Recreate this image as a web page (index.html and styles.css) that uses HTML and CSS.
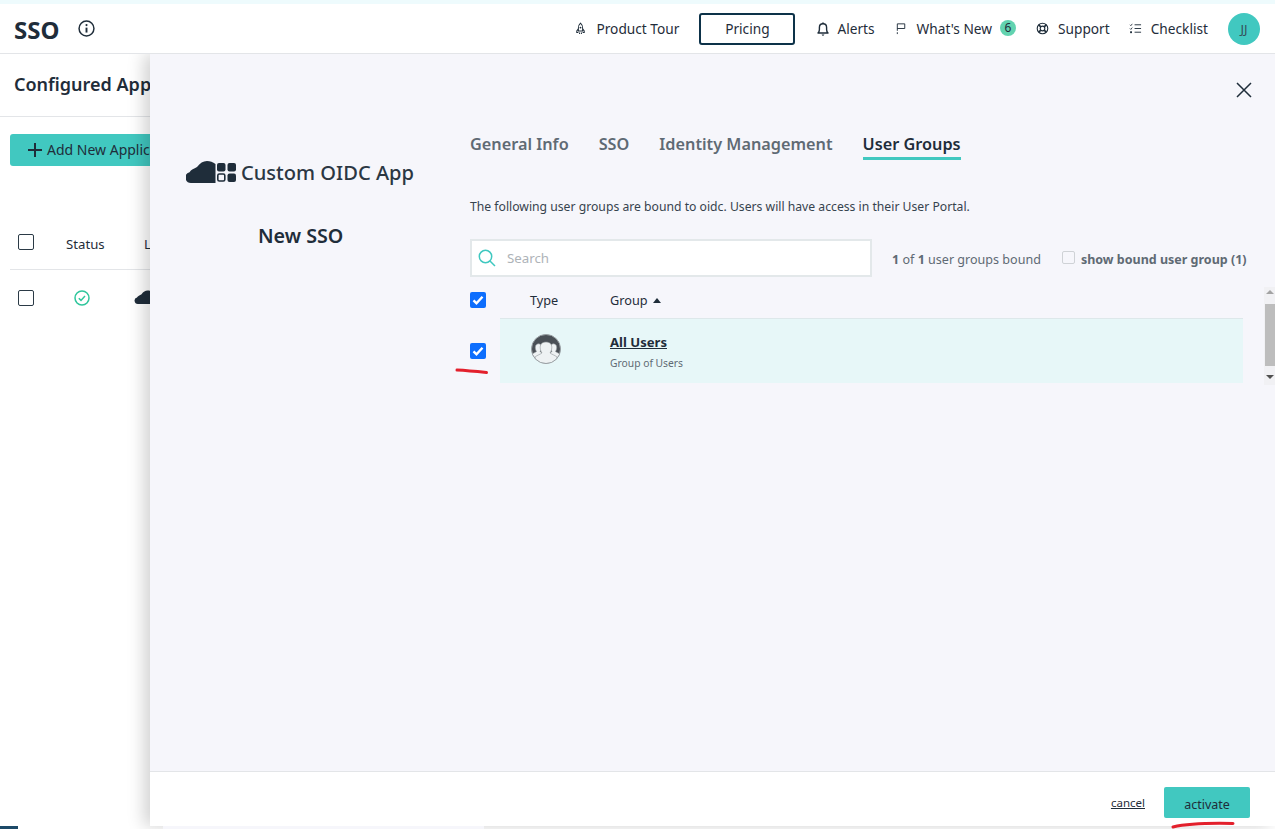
FILE: index.html
```html
<!DOCTYPE html>
<html lang="en">
<head>
<meta charset="utf-8">
<title>SSO</title>
<link rel="stylesheet" href="styles.css">
</head>
<body>
<div class="strip"></div>
<header class="topbar">
  <div class="title-wrap">
    <h1 class="page-title">SSO</h1>
    <svg class="info" viewBox="0 0 16 16"><circle cx="8" cy="8" r="7" fill="none" stroke="#1f2d3a" stroke-width="1.4"/><circle cx="8" cy="4.8" r="1" fill="#1f2d3a"/><path d="M8 7.2v4.6" stroke="#1f2d3a" stroke-width="1.8"/></svg>
  </div>
  <nav class="nav">
    <a class="nav-item tour"><svg class="nav-ico" viewBox="0 0 14 14"><path d="M7 1.2C5.4 2.6 4.7 4.6 4.7 6.6v3.2h4.6V6.6C9.3 4.6 8.6 2.6 7 1.2z M4.7 7.2 3 9.6v1.6h1.7 M9.3 7.2 11 9.6v1.6H9.3 M6 11.4v1.4 M8 11.4v1.4" fill="none" stroke="#1f2d3a" stroke-width="1.1"/><circle cx="7" cy="6" r="1" fill="#1f2d3a"/></svg>Product Tour</a>
    <a class="pricing">Pricing</a>
    <a class="nav-item alerts"><svg class="nav-ico bell" viewBox="0 0 14 16"><path d="M2 12c1-1 1.4-2 1.4-3.6V6.4C3.400 4.200 5 2.700 7 2.700s3.600 1.500 3.600 3.700v2c0 1.600.4 2.600 1.400 3.600z" fill="none" stroke="#1f2d3a" stroke-width="1.4" stroke-linejoin="round"/><path d="M5.600 13.600c.3.800.8 1.200 1.400 1.200s1.100-.4 1.400-1.200zM6.200 1.500h1.600v1.400H6.200z" fill="#1f2d3a"/></svg>Alerts</a>
    <a class="nav-item news"><svg class="nav-ico flag" viewBox="0 0 14 14"><path d="M2.500 13V11M2.500 9.500V2h8v5H2.500" fill="none" stroke="#1f2d3a" stroke-width="1"/></svg>What's New<span class="badge">6</span></a>
    <a class="nav-item support"><svg class="nav-ico" viewBox="0 0 14 14"><circle cx="7" cy="7" r="5.700" fill="none" stroke="#1f2d3a" stroke-width="1.200"/><circle cx="7" cy="7" r="2.500" fill="none" stroke="#1f2d3a" stroke-width="1.200"/><path d="M3 3l2.200 2.200M11 3L8.800 5.200M3 11l2.200-2.200M11 11L8.800 8.800" stroke="#1f2d3a" stroke-width="1.800"/></svg>Support</a>
    <a class="nav-item checklist"><svg class="nav-ico" viewBox="0 0 14 14"><path d="M6 3h7M6 7h7M6 11h7" stroke="#1f2d3a" stroke-width="1"/><path d="M1 3l1 1 1.500-2M1 7l1 1 1.500-2" fill="none" stroke="#1f2d3a" stroke-width=".9"/><rect x="1.200" y="10" width="2" height="2" fill="#1f2d3a"/></svg>Checklist</a>
    <span class="avatar">JJ</span>
  </nav>
</header>

<main class="page">
  <h2 class="section-title">Configured Applications</h2>
  <div class="section-body">
    <button class="add-btn"><svg class="plus" viewBox="0 0 14 14"><path d="M7 0v14M0 7h14" stroke="#1f2d3a" stroke-width="2"/></svg>Add New Application</button>
    <div class="apps-head">
      <span class="box"></span><span class="col-status">Status</span><span class="col-label">Label</span>
    </div>
    <div class="apps-row">
      <span class="box"></span>
      <span class="status-ico"><svg viewBox="0 0 16 16"><circle cx="8" cy="8" r="7" fill="none" stroke="#2fc69c" stroke-width="1.500"/><path d="M4.800 8.200l2.200 2.200 4-4.400" fill="none" stroke="#2fc69c" stroke-width="1.500"/></svg></span>
      <svg class="row-cloud" viewBox="0 0 30 23"><path d="M5 23a5.500 5.500 0 0 1-1.500-10.800C5 9.500 8 9 11 7c3-4 6-6 10-6 3 0 6 1 8.500 3V23z" fill="#1f2d3a"/></svg>
    </div>
  </div>
</main>

<aside class="drawer">
  <button class="close" aria-label="Close"><svg viewBox="0 0 16 16"><path d="M1 1l14 14M15 1L1 15" stroke="#1f2d3a" stroke-width="1.500"/></svg></button>
  <div class="drawer-body">
    <div class="app-side">
      <div class="logo">
        <svg class="logo-cloud" viewBox="0 0 30 23"><path d="M5 23a5.500 5.500 0 0 1-1.500-10.800C5 9.500 8 9 11 7c3-4 6-6 10-6 3 0 6 1 8.500 3V23z" fill="#1f2d3a"/></svg>
        <svg class="logo-grid" viewBox="0 0 19 19"><rect width="8.500" height="8.500" rx="2" fill="#1f2d3a"/><rect x="10.500" width="8.500" height="8.500" rx="2" fill="#1f2d3a"/><rect x=".8" y="11" width="7" height="7" rx="1.500" fill="none" stroke="#1f2d3a" stroke-width="1.600"/><rect x="10.500" y="10.500" width="8.500" height="8.500" rx="2" fill="#1f2d3a"/></svg>
        <span class="logo-text">Custom OIDC App</span>
      </div>
      <h3 class="app-name">New SSO</h3>
    </div>
    <div class="content">
      <div class="tabs">
        <a class="tab">General Info</a>
        <a class="tab">SSO</a>
        <a class="tab">Identity Management</a>
        <a class="tab active">User Groups</a>
      </div>
      <p class="desc">The following user groups are bound to oidc. Users will have access in their User Portal.</p>
      <div class="search-row">
        <div class="search">
          <svg class="search-ico" viewBox="0 0 18 18"><circle cx="7.500" cy="7.500" r="6.200" fill="none" stroke="#3fc8c0" stroke-width="1.500"/><path d="M12 12l5 5" stroke="#3fc8c0" stroke-width="1.500"/></svg>
          <span class="placeholder">Search</span>
        </div>
        <span class="count"><b>1</b> of <b>1</b> user groups bound</span>
        <span class="small-box"></span>
        <span class="show-bound">show bound user group (1)</span>
      </div>
      <div class="table-head">
        <span class="check"><svg viewBox="0 0 16 16"><path d="M3.500 8.300l3 3 6-6.600" fill="none" stroke="#fff" stroke-width="2.400"/></svg></span>
        <span class="th-type">Type</span>
        <span class="th-group">Group<i class="sort"></i></span>
      </div>
      <div class="table-line">
        <span class="check"><svg viewBox="0 0 16 16"><path d="M3.500 8.300l3 3 6-6.600" fill="none" stroke="#fff" stroke-width="2.400"/></svg></span>
        <div class="group-row">
          <svg class="group-ico" viewBox="0 0 30 30">
            <defs><clipPath id="avatar-clip"><circle cx="15" cy="15" r="14.500"/></clipPath></defs>
            <circle cx="15" cy="15" r="14.500" fill="#4a5056"/>
            <g clip-path="url(#avatar-clip)" fill="#eef2f3" stroke="#8f9599" stroke-width=".6">
              <path d="M0 30V21c2-2 4-2.500 5.500-3.500C4.500 16 4 14 4.500 12c.5-1.500 2-2.500 3.500-2.200 1.500.3 2.500 1.500 2.500 3 0 2-.5 3.500-1.500 4.700L14 21v9z"/>
              <path d="M30 30V21c-2-2-4-2.500-5.500-3.500 1-1.500 1.500-3.500 1-5.500-.5-1.500-2-2.500-3.500-2.200-1.500.3-2.500 1.500-2.500 3 0 2 .5 3.500 1.500 4.700L16 21v9z"/>
              <path d="M4 30v-7c2.500-2 5-2.500 7-4-1.500-2-2-4.500-1.700-7 .4-2.500 2.800-4 5.700-4s5.300 1.500 5.700 4c.3 2.500-.2 5-1.700 7 2 1.500 4.500 2 7 4v7z"/>
            </g>
            <circle cx="15" cy="15" r="14.500" fill="none" stroke="#9aa0a4"/>
          </svg>
          <div class="group-text">
            <a class="group-name">All Users</a>
            <span class="group-sub">Group of Users</span>
          </div>
        </div>
      </div>
    </div>
  </div>
  <footer class="drawer-foot">
    <a class="cancel">cancel</a>
    <button class="activate">activate</button>
  </footer>
  <div class="scrollbar"><i class="arrow up"></i><i class="thumb"></i><i class="arrow down"></i></div>
  <svg class="mark mark-check" viewBox="0 0 34 8"><path d="M2 3c10 .5 20 1.500 29.500 2.500" fill="none" stroke="#e3202c" stroke-width="3" stroke-linecap="round"/></svg>
  <svg class="mark mark-btn" viewBox="0 0 64 8"><path d="M2 6C15 3 40 2 62 2.500" fill="none" stroke="#e3202c" stroke-width="3" stroke-linecap="round"/></svg>
</aside>
<div class="crumb"></div>
<div class="under-strip"></div>
</body>
</html>
```
FILE: styles.css
```css
* { box-sizing: border-box; }
html, body { margin: 0; height: 100%; }
body {
  position: relative;
  width: 1275px;
  height: 829px;
  overflow: hidden;
  background: #fff;
  color: #1f2d3a;
  font-family: "Noto Sans", "Open Sans", sans-serif;
  font-size: 13px;
}
.strip { position: relative; z-index: 2; height: 4px; background: #eefbfd; }
.topbar {
  position: relative;
  z-index: 2;
  height: 50px;
  display: flex;
  justify-content: space-between;
  align-items: center;
  background: #fff;
  border-bottom: 1px solid #e3e5e8;
  padding: 0 15px 0 14px;
}
.title-wrap { display: flex; align-items: flex-start; gap: 19px; height: 49px; }
.page-title { margin: 9px 0 0; font-size: 24px; line-height: 33px; font-weight: 700; }
.info { width: 17px; height: 17px; margin-top: 15.500px; }
.nav { display: flex; align-items: center; height: 49px; }
.nav-item { display: flex; align-items: center; font-size: 13.700px; line-height: 18px; white-space: nowrap; }
.nav-ico { width: 13px; height: 13px; margin-right: 9px; flex: none; }
.pricing {
  width: 96px;
  height: 32px;
  margin: 0 21px 0 20px;
  border: 2px solid #0d3249;
  border-radius: 3px;
  display: flex;
  align-items: center;
  justify-content: center;
  font-size: 13.700px;
}
.bell { width: 14px; height: 16px; margin-right: 7px; }
.alerts { margin-right: 20px; }
.badge {
  width: 16px;
  height: 16px;
  margin: -2px 0 0 8px;
  border-radius: 50%;
  background: #62d3b0;
  font-size: 12px;
  line-height: 16px;
  text-align: center;
}
.support { margin-left: 20px; }
.support .nav-ico { margin-right: 9px; }
.checklist { margin-left: 19px; }
.avatar {
  width: 32px;
  height: 32px;
  margin-left: 20px;
  border-radius: 50%;
  background: #41c8c0;
  font-size: 13px;
  line-height: 32px;
  text-align: center;
  color: #35505a;
}
.page { height: 775px; }
.section-title {
  height: 63px;
  margin: 0;
  padding: 17px 14px 0;
  font-size: 18px;
  line-height: 27px;
  font-weight: 600;
  white-space: nowrap;
  border-bottom: 1px solid #e3e5e8;
}
.section-body { padding: 17px 10px 0; }
.add-btn {
  display: flex;
  align-items: center;
  width: 200px;
  height: 32px;
  padding: 0 0 0 18px;
  border: 0;
  border-radius: 3px;
  background: #41c8c0;
  color: #1f2d3a;
  font: 14px/20px "Noto Sans", "Open Sans", sans-serif;
  white-space: nowrap;
}
.plus { width: 14px; height: 14px; margin-right: 5px; flex: none; }
.apps-head, .apps-row { display: flex; align-items: center; white-space: nowrap; }
.apps-head { height: 56px; margin-top: 48px; padding: 0 0 0 8px; border-bottom: 1px solid #e3e5e8; }
.apps-row { height: 56px; padding: 0 0 0 8px; }
.box { width: 16px; height: 16px; border: 1.500px solid #2b3a46; border-radius: 2px; flex: none; }
.col-status { margin-left: 32px; width: 78px; padding-top: 4px; font-size: 13.200px; }
.col-label { padding-top: 4px; font-size: 13.200px; }
.status-ico { display: flex; margin-left: 40px; width: 70px; }
.status-ico svg { width: 16px; height: 16px; }
.row-cloud { width: 28px; height: 14px; margin: -2px 0 0 -14px; }
.drawer {
  position: absolute;
  left: 150px;
  top: 54px;
  width: 1125px;
  height: 772px;
  display: flex;
  flex-direction: column;
  background: #f6f6fb;
  box-shadow: -6px 0 16px rgba(0, 0, 0, .18);
}
.close { position: absolute; top: 28px; right: 23px; width: 16px; height: 16px; padding: 0; border: 0; background: none; }
.close svg { display: block; width: 16px; height: 16px; }
.drawer-body { flex: 1; display: flex; min-height: 0; }
.app-side { width: 320px; padding-top: 106px; flex: none; }
.logo { display: flex; align-items: center; height: 26px; margin-left: 36px; }
.logo-cloud { width: 30px; height: 23px; flex: none; margin-top: -3px; }
.logo-grid { width: 19px; height: 19px; flex: none; margin: -1px 0 0 1px; }
.logo-text { margin-left: 5px; font-size: 20.100px; line-height: 26px; font-weight: 500; white-space: nowrap; color: #2b3743; }
.app-name { margin: 37px 0 0; padding-left: 108px; font-size: 19.700px; line-height: 26px; font-weight: 600; }
.content { width: 780px; padding-top: 79px; }
.tabs { display: flex; gap: 30px; height: 27px; }
.tab { font-size: 16.250px; line-height: 22px; font-weight: 600; color: #5f6a74; height: 27px; white-space: nowrap; }
.tab.active { color: #1f2d3a; border-bottom: 3px solid #41c8c0; }
.desc { margin: 38px 0 0; font-size: 12.200px; line-height: 18px; color: #36434e; }
.search-row { display: flex; align-items: center; margin-top: 23px; height: 38px; }
.search {
  width: 402px;
  height: 38px;
  display: flex;
  align-items: center;
  padding-left: 6px;
  background: #fff;
  border: 2px solid #e3e8ea;
}
.search-ico { width: 18px; height: 18px; }
.placeholder { margin-left: 11px; font-size: 13.300px; color: #aeb3b8; }
.count { margin-left: 20px; padding-top: 2px; font-size: 12.550px; color: #5f6a74; white-space: nowrap; }
.small-box { width: 13px; height: 13px; margin: -2px 0 0 21px; border: 1px solid #cfd2d6; border-radius: 2px; background: #f6f6fb; flex: none; }
.show-bound { margin-left: 6px; padding-top: 2px; font-size: 12.500px; font-weight: 700; color: #5f6a74; white-space: nowrap; }
.table-head { display: flex; align-items: center; height: 36px; margin-top: 5px; font-size: 12.700px; }
.check { display: block; width: 16px; height: 16px; background: #0d6efd; border-radius: 2px; flex: none; }
.check svg { display: block; width: 16px; height: 16px; }
.th-type { margin-left: 44px; width: 80px; }
.th-group { display: flex; align-items: center; }
.sort { width: 0; height: 0; margin-left: 5px; border: 4px solid transparent; border-top: 0; border-bottom: 5px solid #1f2d3a; }
.table-line { display: flex; align-items: center; }
.group-row {
  width: 743px;
  height: 65px;
  margin-left: 14px;
  display: flex;
  align-items: center;
  padding-left: 31px;
  background: #e7f7f8;
  border-top: 1px solid #dde8ea;
}
.group-ico { width: 30px; height: 30px; margin-top: -5px; flex: none; }
.group-text { margin-left: 49px; display: flex; flex-direction: column; }
.group-name { font-size: 13.100px; line-height: 18px; font-weight: 700; text-decoration: underline; }
.group-sub { margin-top: 5px; font-size: 10.300px; line-height: 14px; color: #5f6a74; }
.drawer-foot {
  height: 55px;
  display: flex;
  justify-content: flex-end;
  align-items: flex-start;
  padding: 15px 25px 0 0;
  border-top: 1px solid #e3e5e8;
  background: #fff;
}
.cancel { margin: 8px 19px 0 0; font-size: 11.500px; line-height: 16px; text-decoration: underline; }
.activate {
  width: 86px;
  height: 31px;
  padding: 4px 0 0;
  border: 0;
  border-radius: 2px;
  background: #41c8c0;
  color: #1f2d3a;
  font: 12.500px/18px "Noto Sans", "Open Sans", sans-serif;
}
.scrollbar {
  position: absolute;
  left: 1114px;
  top: 233px;
  width: 11px;
  height: 98px;
  background: #f1f1f4;
}
.scrollbar i { position: absolute; display: block; }
.thumb { left: 1px; top: 17px; width: 10px; height: 62px; background: #bdbdbd; }
.arrow { left: 2px; width: 0; height: 0; border: 4px solid transparent; }
.arrow.up { top: 3px; border-top: 0; border-bottom: 4px solid #a3a3a3; }
.arrow.down { top: 88px; border-bottom: 0; border-top: 4px solid #505050; }
.mark { position: absolute; display: block; }
.mark-check { left: 305px; top: 313px; width: 34px; height: 8px; }
.mark-btn { left: 1021px; top: 767px; width: 64px; height: 8px; }
.crumb { position: absolute; left: 0; top: 826px; width: 18px; height: 3px; background: #1d4a68; }
.under-strip { position: absolute; left: 163px; top: 826px; width: 321px; height: 3px; background: #f6f6fb; }
```
